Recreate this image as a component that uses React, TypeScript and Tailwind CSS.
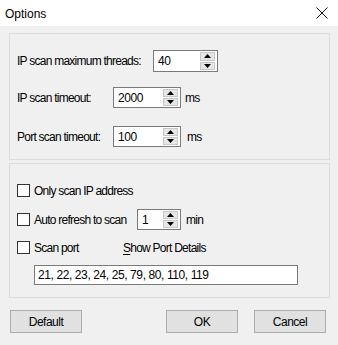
import React from "react";

const font = { fontFamily: '"Liberation Sans", Arial, sans-serif' };

function Arrow({ up }: { up: boolean }) {
  return (
    <svg width="7" height="4" viewBox="0 0 7 4">
      <polygon points={up ? "3.5,0 7,4 0,4" : "0,0 7,0 3.5,4"} fill="#000" />
    </svg>
  );
}

function Spin({ value, w, h = "h-[21px]" }: { value: string; w: string; h?: string }) {
  return (
    <div className={`flex ${w} ${h} bg-white border border-[#7a7a7a] py-[1px] pr-[2px]`}>
      <span className="flex-1 flex items-center pl-[4px] text-[12px] tracking-[-0.4px]">{value}</span>
      <div className="flex flex-col w-[15px] gap-[1px]">
        <div className="flex-1 flex items-center justify-center bg-[#e6e6e6] border border-[#c8c8c8]">
          <Arrow up />
        </div>
        <div className="flex-1 flex items-center justify-center bg-[#e6e6e6] border border-[#c8c8c8]">
          <Arrow up={false} />
        </div>
      </div>
    </div>
  );
}

function Check() {
  return <div className="w-[13px] h-[13px] bg-white border border-[#333]" />;
}

function Btn({ label }: { label: string }) {
  return (
    <div className="w-[72px] h-[23px] flex items-center justify-center bg-[#e1e1e1] border border-[#adadad] text-[12px] tracking-[-0.5px]">
      {label}
    </div>
  );
}

export default function App() {
  return (
    <div className="w-[338px] h-[345px] bg-[#f0f0f0] flex flex-col text-black overflow-hidden" style={font}>
      {/* title bar */}
      <div className="h-[26px] bg-white flex items-center justify-between pl-[5px] pr-[10px]">
        <span className="text-[12px] pt-[1px]">Options</span>
        <svg width="12" height="12" viewBox="0 0 12 12">
          <path d="M0.5 0.5 L11.5 11.5 M11.5 0.5 L0.5 11.5" stroke="#111" strokeWidth="1" />
        </svg>
      </div>

      <div className="flex flex-col pl-[9px] pt-[7px] text-[12px] tracking-[-0.75px]">
        {/* box 1 */}
        <div className="w-[321px] border border-[#dcdcdc] flex flex-col pl-[7px] pt-[16px] pb-[12px]">
          <div className="flex items-center h-[22px]">
            <span className="w-[136px]">IP scan maximum threads:</span>
            <Spin value="40" w="w-[65px]" h="h-[22px]" />
          </div>
          <div className="flex items-center h-[21px] mt-[15px]">
            <span className="w-[96px]">IP scan timeout:</span>
            <Spin value="2000" w="w-[68px]" />
            <span className="ml-[4px]">ms</span>
          </div>
          <div className="flex items-center h-[21px] mt-[18px]">
            <span className="w-[96px]">Port scan timeout:</span>
            <Spin value="100" w="w-[68px]" />
            <span className="ml-[6px]">ms</span>
          </div>
        </div>

        {/* box 2 */}
        <div className="w-[321px] mt-[3px] border border-[#dcdcdc] flex flex-col pl-[7px] pt-[16px] pb-[12px]">
          <div className="flex items-center h-[21px] gap-[4px]">
            <Check />
            <span>Only scan IP address</span>
          </div>
          <div className="flex items-center h-[21px] mt-[8px]">
            <Check />
            <span className="ml-[4px] w-[103px]">Auto refresh to scan</span>
            <Spin value="1" w="w-[44px]" />
            <span className="ml-[5px]">min</span>
          </div>
          <div className="flex items-center h-[21px] mt-[7px]">
            <Check />
            <span className="ml-[4px] w-[89px]">Scan port</span>
            <span>
              <span className="underline underline-offset-2">S</span>how Port Details
            </span>
          </div>
          <div className="ml-[17px] mt-[7px] w-[264px] h-[20px] bg-white border border-[#7a7a7a] flex items-center pl-[3px] tracking-[-0.4px]">
            21, 22, 23, 24, 25, 79, 80, 110, 119
          </div>
        </div>

        {/* buttons */}
        <div className="flex items-center mt-[12px] pl-[1px]">
          <Btn label="Default" />
          <div className="ml-[84px]">
            <Btn label="OK" />
          </div>
          <div className="ml-[16px]">
            <Btn label="Cancel" />
          </div>
        </div>
      </div>
    </div>
  );
}
